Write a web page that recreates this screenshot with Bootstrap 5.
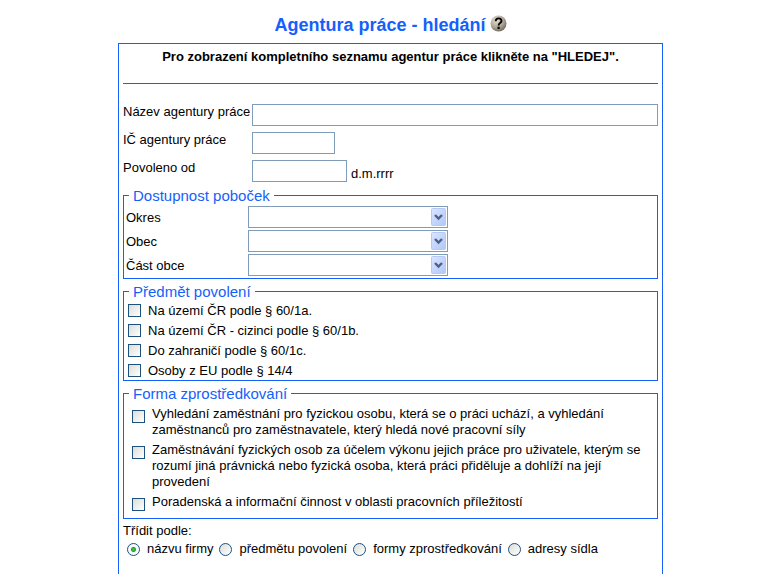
<!DOCTYPE html>
<html lang="cs">
<head>
<meta charset="utf-8">
<meta name="viewport" content="width=device-width, initial-scale=1">
<title>Agentura práce - hledání</title>
<link href="https://cdn.jsdelivr.net/npm/bootstrap@5.3.0/dist/css/bootstrap.min.css" rel="stylesheet">
<style>
  body { font-family: "Liberation Sans", Arial, sans-serif; font-size: 13px; line-height: 16px; color: #000; background: #fff; padding-right: 1px; }
  .page { max-width: 545px; }
  .page-title { color: #1560fb; padding: 14px 0 7px; }
  .page-title h1 { font-size: 18px; line-height: 22px; }
  .search-box { border: 1px solid #1560fb; border-bottom: 0; }
  .intro { padding: 5px 0 18px; }
  .divider { border-color: #1560fb; opacity: 1; margin-bottom: 20px; }
  .field-row { gap: 4px; margin-bottom: 6px; }
  .field-label { width: 125px; white-space: nowrap; }
  .field-hint { padding-top: 6px; }
  .form-control.xp, .form-select.xp { height: 22px; padding: 0 4px; font-size: 13px; line-height: 16px; border: 1px solid #7f9db9; border-radius: 0; background-color: #fff; }
  .form-control.w-id { width: 83px; }
  .form-control.w-date { width: 95px; }
  .form-select.xp { width: 200px; padding-right: 20px; background-position: right 1px center; background-size: 16px 18px;
    background-image: url("data:image/svg+xml,%3Csvg xmlns='http://www.w3.org/2000/svg' viewBox='-1 0 16 18'%3E%3Cdefs%3E%3ClinearGradient id='g' x2='1' y2='1'%3E%3Cstop stop-color='%23dce6ff'/%3E%3Cstop offset='.5' stop-color='%23c5d5fc'/%3E%3Cstop offset='1' stop-color='%23aec8f7'/%3E%3C/linearGradient%3E%3C/defs%3E%3Crect x='.5' y='.5' width='14' height='17' rx='1' fill='url(%23g)' stroke='%23b5c9f5'/%3E%3Cpath d='M4 7l3.500 3.500L11 7' fill='none' stroke='%234d6185' stroke-width='2.400'/%3E%3C/svg%3E"); }
  .group { border: 1px solid #1560fb; margin-bottom: 4px; }
  .group.first { margin-top: -1px; }
  .group legend { float: none; width: auto; margin: 0 0 0 5px; padding: 0 4px; font-size: 15px; line-height: 17px; color: #1560fb; }
  .select-list { padding: 2px; gap: 2px; }
  .select-label { width: 122px; padding-top: 1px; }
  .check-row { height: 20px; gap: 7px; padding-left: 4px; }
  .check-row label { padding-top: 2px; }
  .activity-list { padding: 4px 8px 7px; gap: 4px; }
  .activity { gap: 7px; }
  .activity .form-check-input { margin-top: 4px; }
  .form-check-input { width: 13px; height: 13px; margin: 0; flex: none; border: 1px solid #1c5180; background: linear-gradient(135deg, #dcdcd7, #fff); }
  .form-check-input[type=checkbox] { border-radius: 0; }
  .form-check-input[type=radio]:checked { border-color: #1c5180; background: radial-gradient(circle, #4fc94c 0, #21a121 2px, #f3f3f0 3px, #fff 6px); }
  .sort-list { column-gap: 6px; padding: 2px 4px 0; }
  .sort-option { gap: 7px; }
  .help-link svg { display: block; margin-bottom: 4px; }
</style>
</head>
<body>
<main class="page d-flex flex-column min-vh-100 mx-auto">
  <div class="page-title d-flex justify-content-center align-items-center gap-1">
    <h1 class="m-0 fw-bold">Agentura práce - hledání</h1>
    <a href="#" class="help-link" aria-label="Nápověda">
      <svg width="17" height="17" viewBox="0 0 17 17" aria-hidden="true">
        <defs><radialGradient id="stone" cx=".38" cy=".3" r=".75"><stop stop-color="#e6e0d3"/><stop offset=".55" stop-color="#b3aa99"/><stop offset="1" stop-color="#6e675b"/></radialGradient></defs>
        <circle cx="8.500" cy="8.500" r="8" fill="url(#stone)"/>
        <path d="M5.700 6.300C5.700 2.500 11.500 2.500 11.500 6C11.500 8.200 8.600 8 8.600 10.500" fill="none" stroke="#000" stroke-width="1.900"/>
        <rect x="7.500" y="11.700" width="2.200" height="2.200" fill="#000"/>
      </svg>
    </a>
  </div>

  <form class="search-box flex-grow-1 px-1">
    <p class="intro m-0 text-center fw-bold">Pro zobrazení kompletního seznamu agentur práce klikněte na "HLEDEJ".</p>
    <hr class="divider mt-0">

    <div class="field-row d-flex">
      <label class="field-label flex-shrink-0" for="nazev">Název agentury práce</label>
      <input class="form-control xp" type="text" id="nazev">
    </div>
    <div class="field-row d-flex">
      <label class="field-label flex-shrink-0" for="ic">IČ agentury práce</label>
      <input class="form-control xp w-id" type="text" id="ic">
    </div>
    <div class="field-row d-flex">
      <label class="field-label flex-shrink-0" for="povoleno">Povoleno od</label>
      <input class="form-control xp w-date" type="text" id="povoleno">
      <span class="field-hint">d.m.rrrr</span>
    </div>

    <fieldset class="group first">
      <legend>Dostupnost poboček</legend>
      <div class="select-list d-flex flex-column">
        <div class="d-flex align-items-center">
          <label class="select-label" for="okres">Okres</label>
          <select class="form-select xp" id="okres"><option></option></select>
        </div>
        <div class="d-flex align-items-center">
          <label class="select-label" for="obec">Obec</label>
          <select class="form-select xp" id="obec"><option></option></select>
        </div>
        <div class="d-flex align-items-center">
          <label class="select-label" for="cast">Část obce</label>
          <select class="form-select xp" id="cast"><option></option></select>
        </div>
      </div>
    </fieldset>

    <fieldset class="group">
      <legend>Předmět povolení</legend>
      <div class="check-row d-flex align-items-center"><input class="form-check-input" type="checkbox" id="p1"><label for="p1">Na území ČR podle § 60/1a.</label></div>
      <div class="check-row d-flex align-items-center"><input class="form-check-input" type="checkbox" id="p2"><label for="p2">Na území ČR - cizinci podle § 60/1b.</label></div>
      <div class="check-row d-flex align-items-center"><input class="form-check-input" type="checkbox" id="p3"><label for="p3">Do zahraničí podle § 60/1c.</label></div>
      <div class="check-row d-flex align-items-center"><input class="form-check-input" type="checkbox" id="p4"><label for="p4">Osoby z EU podle § 14/4</label></div>
    </fieldset>

    <fieldset class="group">
      <legend>Forma zprostředkování</legend>
      <div class="activity-list d-flex flex-column">
        <div class="activity d-flex"><input class="form-check-input" type="checkbox" id="f1"><label for="f1">Vyhledání zaměstnání pro fyzickou osobu, která se o práci uchází, a vyhledání zaměstnanců pro zaměstnavatele, který hledá nové pracovní síly</label></div>
        <div class="activity d-flex"><input class="form-check-input" type="checkbox" id="f2"><label for="f2">Zaměstnávání fyzických osob za účelem výkonu jejich práce pro uživatele, kterým se rozumí jiná právnická nebo fyzická osoba, která práci přiděluje a dohlíží na její provedení</label></div>
        <div class="activity d-flex"><input class="form-check-input" type="checkbox" id="f3"><label for="f3">Poradenská a informační činnost v oblasti pracovních příležitostí</label></div>
      </div>
    </fieldset>

    <div id="sort-label">Třídit podle:</div>
    <div class="sort-list d-flex flex-wrap" role="radiogroup" aria-labelledby="sort-label">
      <div class="sort-option d-flex align-items-center"><input class="form-check-input" type="radio" name="sort" id="s1" checked><label for="s1">názvu firmy</label></div>
      <div class="sort-option d-flex align-items-center"><input class="form-check-input" type="radio" name="sort" id="s2"><label for="s2">předmětu povolení</label></div>
      <div class="sort-option d-flex align-items-center"><input class="form-check-input" type="radio" name="sort" id="s3"><label for="s3">formy zprostředkování</label></div>
      <div class="sort-option d-flex align-items-center"><input class="form-check-input" type="radio" name="sort" id="s4"><label for="s4">adresy sídla</label></div>
    </div>
  </form>
</main>
<script src="https://cdn.jsdelivr.net/npm/bootstrap@5.3.0/dist/js/bootstrap.bundle.min.js"></script>
</body>
</html>
